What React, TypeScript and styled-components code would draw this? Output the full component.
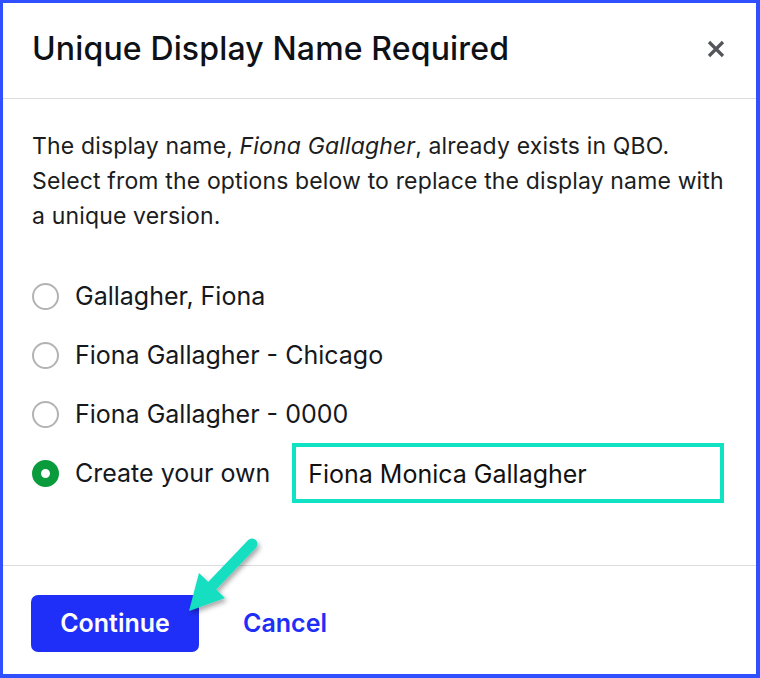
import React, { useState } from "react";
import styled, { createGlobalStyle } from "styled-components";

const Global = createGlobalStyle`
  html, body { margin: 0; padding: 0; background: #ffffff; }
  body { font-family: Inter, "Noto Sans", sans-serif; }
  * { box-sizing: border-box; }
`;

const Frame = styled.div`
  position: relative;
  width: 760px;
  height: 678px;
  border-style: solid;
  border-color: #3050ff;
  border-width: 3px 4px 4px 3px;
  background: #ffffff;
  display: flex;
  flex-direction: column;
`;

const Header = styled.div`
  height: 96px;
  display: flex;
  align-items: center;
  justify-content: space-between;
  padding: 0 30px 4px 29px;
  border-bottom: 1px solid #dcdcdc;
  flex-shrink: 0;
`;

const Title = styled.h1`
  margin: 0;
  font-size: 32px;
  font-weight: 500;
  color: #0e1116;
  letter-spacing: 0.15px;
`;

const CloseButton = styled.button`
  width: 20px;
  height: 20px;
  padding: 0;
  border: 0;
  background: transparent;
  display: flex;
  align-items: center;
  justify-content: center;
  cursor: pointer;
`;

const Body = styled.div`
  flex: 1;
  padding: 30px 24px 0 29px;
  border-bottom: 1px solid #dcdcdc;
`;

const Message = styled.p`
  margin: 0 0 42px 0;
  font-size: 23px;
  line-height: 35px;
  letter-spacing: 0.15px;
  color: #1b1d21;
  white-space: nowrap;
`;

const Options = styled.div`
  display: flex;
  flex-direction: column;
  gap: 19px;
`;

const OptionRow = styled.label`
  display: flex;
  align-items: center;
  height: 40px;
  cursor: pointer;
`;

const Radio = styled.span<{ $checked: boolean }>`
  width: 27px;
  height: 27px;
  border-radius: 50%;
  flex-shrink: 0;
  border: ${(p) => (p.$checked ? "9px solid #0a9c3c" : "2.5px solid #b3b3b3")};
  background: #ffffff;
`;

const OptionLabel = styled.span`
  margin-left: 16px;
  font-size: 25px;
  color: #15181d;
  white-space: nowrap;
`;

const NameInput = styled.input`
  margin-left: 22px;
  width: 432px;
  height: 60px;
  border: 4px solid #10e3c3;
  padding: 2px 12px 0 12px;
  font-family: Inter, "Noto Sans", sans-serif;
  font-size: 25px;
  color: #111111;
  outline: none;
`;

const Footer = styled.div`
  height: 108px;
  display: flex;
  align-items: center;
  gap: 44px;
  padding: 0 28px 0 28px;
  flex-shrink: 0;
`;

const PrimaryButton = styled.button`
  width: 168px;
  height: 57px;
  margin-top: 6px;
  border: 0;
  border-radius: 7px;
  background: #1f2ff8;
  color: #ffffff;
  font-family: Inter, "Noto Sans", sans-serif;
  font-size: 25px;
  font-weight: 600;
  cursor: pointer;
`;

const LinkButton = styled.button`
  border: 0;
  margin-top: 6px;
  padding: 0;
  background: transparent;
  color: #1f2ff8;
  font-family: Inter, "Noto Sans", sans-serif;
  font-size: 25px;
  font-weight: 600;
  cursor: pointer;
`;

const Pointer = styled.svg`
  position: absolute;
  left: 170px;
  top: 528px;
  width: 100px;
  height: 100px;
  pointer-events: none;
  overflow: visible;
`;

const options = [
  "Gallagher, Fiona",
  "Fiona Gallagher - Chicago",
  "Fiona Gallagher - 0000",
];

export default function App() {
  const [selected, setSelected] = useState(3);
  return (
    <>
      <Global />
      <Frame>
        <Header>
          <Title>Unique Display Name Required</Title>
          <CloseButton aria-label="Close">
            <svg width="18" height="18" viewBox="0 0 18 18">
              <path d="M2 2 L16 16 M16 2 L2 16" stroke="#54565b" strokeWidth="3.2" strokeLinecap="butt" />
            </svg>
          </CloseButton>
        </Header>
        <Body>
          <Message>
            The display name, <em>Fiona Gallagher</em>, already exists in QBO.
            <br />
            Select from the options below to replace the display name with
            <br />
            a unique version.
          </Message>
          <Options>
            {options.map((o, i) => (
              <OptionRow key={o} onClick={() => setSelected(i)}>
                <Radio $checked={selected === i} />
                <OptionLabel>{o}</OptionLabel>
              </OptionRow>
            ))}
            <OptionRow onClick={() => setSelected(3)}>
              <Radio $checked={selected === 3} />
              <OptionLabel>Create your own</OptionLabel>
              <NameInput defaultValue="Fiona Monica Gallagher" />
            </OptionRow>
          </Options>
        </Body>
        <Footer>
          <PrimaryButton>Continue</PrimaryButton>
          <LinkButton>Cancel</LinkButton>
        </Footer>
        <Pointer viewBox="0 0 100 100">
          <defs>
            <filter id="sh" x="-30%" y="-30%" width="160%" height="160%">
              <feDropShadow dx="2" dy="3" stdDeviation="2.5" floodColor="#000" floodOpacity="0.35" />
            </filter>
          </defs>
          <g filter="url(#sh)">
            <line x1="79" y1="13" x2="36" y2="58" stroke="#12dfc1" strokeWidth="11" strokeLinecap="round" />
            <polygon points="16,80 26,42 52,67" fill="#12dfc1" />
          </g>
        </Pointer>
      </Frame>
    </>
  );
}
